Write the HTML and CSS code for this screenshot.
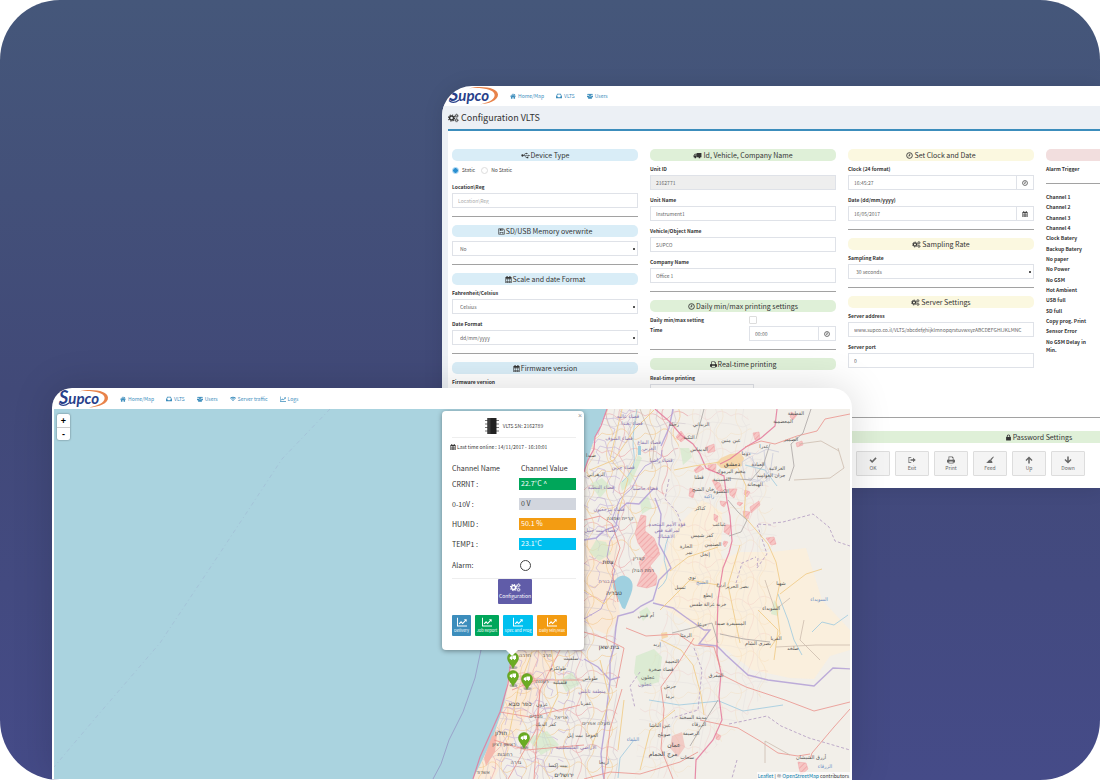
FILE: index.html
```html
<!DOCTYPE html>
<html lang="en">
<head>
<meta charset="utf-8">
<title>Supco VLTS</title>
<link rel="stylesheet" href="styles.css">
</head>
<body>
<svg class="sprite" aria-hidden="true">
  <symbol id="i-home" viewBox="0 0 16 16"><path d="M8 1.500 0 8.600l1 1.100L8 3.600l7 6.100 1-1.100-2.500-2.200V2.500h-2v2.100z"/><path d="M8 4.800 2.500 9.500V15h4v-4h3v4h4V9.500z"/></symbol>
  <symbol id="i-inbox" viewBox="0 0 16 16"><path fill-rule="evenodd" d="M3.200 2h9.600L16 9v5H0V9zM4.500 4 2.300 9H5l1 2h4l1-2h2.700L11.500 4z"/></symbol>
  <symbol id="i-users" viewBox="0 0 16 16"><circle cx="3" cy="4" r="2.200"/><circle cx="13" cy="4" r="2.200"/><circle cx="8" cy="5" r="3"/><path d="M0 7h4.500l1 2L3 11H0zM16 7h-4.500l-1 2 2.500 2h3zM3 15v-4q1-3 5-2.500 4-.5 5 2.500v4z"/></symbol>
  <symbol id="i-wifi" viewBox="0 0 16 16"><path d="M0 5.500Q8-1.500 16 5.500L14.300 7.300Q8 2 1.700 7.300zM2.800 8.300Q8 4 13.200 8.300L11.400 10.200Q8 7.600 4.600 10.200zM8 14l-2.500-2.700Q8 9.500 10.500 11.300z"/></symbol>
  <symbol id="i-chart" viewBox="0 0 16 16"><path d="M0 1h1.500v12.500H16V15H0z"/><path d="M2.800 10.300 6.500 6.500l2.500 2.500 3.700-3.800L11 3.500h4.500V8l-1.500-1.500-5 5-2.500-2.500-2.300 2.700z"/></symbol>
  <symbol id="i-cogs" viewBox="0 0 20 16"><g fill="none" stroke="currentColor"><circle cx="6.500" cy="8" r="3.600" stroke-width="2.600"/><circle cx="6.500" cy="8" r="5.600" stroke-width="2" stroke-dasharray="2.200 2.200"/><circle cx="15.500" cy="4" r="1.900" stroke-width="1.500"/><circle cx="15.500" cy="4" r="3.100" stroke-width="1.300" stroke-dasharray="1.220 1.220"/><circle cx="15.500" cy="12" r="1.900" stroke-width="1.500"/><circle cx="15.500" cy="12" r="3.100" stroke-width="1.300" stroke-dasharray="1.220 1.220"/></g></symbol>
  <symbol id="i-usb" viewBox="0 0 20 16"><circle cx="3" cy="8" r="2.600"/><path d="M3 7.300h14V5.500L20 8l-3 2.500V8.700H3z"/><path d="M6 8l3-4.500h3M8 8l3 4.500h3" fill="none" stroke="currentColor" stroke-width="1.400"/><circle cx="13" cy="3.500" r="1.700"/><path d="M13 10.800h3.400v3.400H13z"/></symbol>
  <symbol id="i-save" viewBox="0 0 16 16"><path fill-rule="evenodd" d="M1 1h11l3 3v11H1zM2.500 2.500v11H4V9h8v4.500h1.500v-9l-2-2H11V6.500H4v-4zM8 3v2.500h1.800V3zM5.500 10.500v3h5v-3z"/></symbol>
  <symbol id="i-calendar" viewBox="0 0 16 16"><path fill-rule="evenodd" d="M1 2.500h2.500V0H6v2.500h4V0h2.500v2.500H15V16H1zM2.500 6v2.300h3V6zm4 0v2.300h3V6zm4 0v2.300h3V6zm-8 3.300v2.300h3V9.300zm4 0v2.300h3V9.300zm4 0v2.300h3V9.300zm-8 3.300v2.200h3v-2.200zm4 0v2.200h3v-2.200zm4 0v2.200h3v-2.200z"/></symbol>
  <symbol id="i-truck" viewBox="0 0 18 16"><path fill-rule="evenodd" d="M7 2h11v10H7zM0 12V7.500L3 4h3.500v8zM1.500 8H5V5.500H3.500z"/><circle cx="4" cy="12.500" r="2"/><circle cx="13.500" cy="12.500" r="2"/></symbol>
  <symbol id="i-clock" viewBox="0 0 16 16"><g fill="none" stroke="currentColor" stroke-width="2"><circle cx="8" cy="8" r="6.500"/><path d="M8.500 4v4.800H5.500"/></g></symbol>
  <symbol id="i-print" viewBox="0 0 16 16"><path fill-rule="evenodd" d="M3 1h8l2 2v4h1.500L16 8.500V13h-3v2H3v-2H0V8.500L1.500 7H3zM4.500 2.500v5h7V4H10V2.500zM4.500 11v2.500h7V11z"/></symbol>
  <symbol id="i-lock" viewBox="0 0 16 16"><path fill-rule="evenodd" d="M2.500 7H4V5q0-4 4-4t4 4v2h1.500v8h-11zM6 7h4V5q0-2-2-2T6 5z"/></symbol>
  <symbol id="i-check" viewBox="0 0 16 16"><path d="M1 8.500 3.200 6.300 6.300 9.400 13 2.700l2.200 2.200-8.900 9z"/></symbol>
  <symbol id="i-exit" viewBox="0 0 16 16"><path d="M6.500 2v1.500h-4v9h4V14H1V2zM10 3.500 15.500 8 10 12.500V9.700H5V6.300h5z"/></symbol>
  <symbol id="i-feed" viewBox="0 0 16 16"><path d="M0 14q3-1 4-4l4-3 4 3 1 4zM8.500 6.500 14.500 1l1.200 1-5 6.500z"/></symbol>
  <symbol id="i-up" viewBox="0 0 16 16"><path d="M8 1 15 8.200 13.200 10 9.500 6.500V15h-3V6.500L2.800 10 1 8.200z"/></symbol>
  <symbol id="i-down" viewBox="0 0 16 16"><path d="M8 15 1 7.800 2.800 6l3.700 3.500V1h3v8.500L13.200 6 15 7.800z"/></symbol>
  <symbol id="i-pin" viewBox="0 0 24 34"><ellipse cx="13" cy="31" rx="8" ry="3" fill="#345" opacity=".35"/><path d="M12 33C9 25 1 20 1 12a11 11 0 0 1 22 0c0 8-8 13-11 21z" fill="#6aac22" stroke="#579316"/><path d="M11 7h7v7h-7zM5.500 14v-3.500L8 8.500h2.500V14z" fill="#fff"/><circle cx="9" cy="14.500" r="1.500" fill="#fff"/><circle cx="15" cy="14.500" r="1.500" fill="#fff"/></symbol>
</svg>

<main class="scene">
  <section class="window config" aria-label="Configuration">
    <header class="topbar">
      <svg class="logo" viewBox="0 0 52 20" role="img" aria-label="Supco"><path d="M22 2.300C36-.8 50.500 2 51 8.500c.4 6-9 9.500-19 10C40 16.800 48 14 47.600 8.800 47.200 3.500 36 1.200 22 2.300z" fill="#e8834a"/><path d="M2 14.500Q6 18.500 12 14" fill="none" stroke="#28408a" stroke-width="1.200"/><text x="2" y="15" class="logo-text"><tspan class="logo-cap">S</tspan>upco</text></svg>
      <nav class="nav">
        <a href="#"><svg><use href="#i-home"/></svg>Home/Map</a>
        <a href="#"><svg><use href="#i-inbox"/></svg>VLTS</a>
        <a href="#"><svg><use href="#i-users"/></svg>Users</a>
      </nav>
    </header>
    <div class="page">
      <h1 class="page-title"><svg><use href="#i-cogs"/></svg>Configuration VLTS</h1>
      <form class="panel">
        <div class="columns">
          <div class="column">
            <h2 class="pill blue"><svg class="wide"><use href="#i-usb"/></svg>Device Type</h2>
            <div class="radios">
              <label><input type="radio" name="type" checked>Static</label>
              <label><input type="radio" name="type">No Static</label>
            </div>
            <div class="field"><label for="loc">Location\Reg</label><input id="loc" type="text" placeholder="Location\Reg"></div>
            <hr>
            <h2 class="pill blue"><svg><use href="#i-save"/></svg>SD/USB Memory overwrite</h2>
            <div class="field"><select aria-label="SD/USB Memory overwrite"><option>No</option></select></div>
            <hr>
            <h2 class="pill blue"><svg><use href="#i-calendar"/></svg>Scale and date Format</h2>
            <div class="field"><label for="deg">Fahrenheit/Celsius</label><select id="deg"><option>Celsius</option></select></div>
            <div class="field"><label for="fmt">Date Format</label><select id="fmt"><option>dd/mm/yyyy</option></select></div>
            <hr>
            <h2 class="pill blue"><svg><use href="#i-calendar"/></svg>Firmware version</h2>
            <div class="field"><label for="fw">Firmware version</label><input id="fw" type="text"></div>
          </div>
          <div class="column">
            <h2 class="pill green"><svg class="wide"><use href="#i-truck"/></svg>Id, Vehicle, Company Name</h2>
            <div class="field"><label for="uid">Unit ID</label><input id="uid" type="text" value="2162771" disabled></div>
            <div class="field"><label for="uname">Unit Name</label><input id="uname" type="text" value="Instrument1"></div>
            <div class="field"><label for="vname">Vehicle/Object Name</label><input id="vname" type="text" value="SUPCO"></div>
            <div class="field"><label for="cname">Company Name</label><input id="cname" type="text" value="Office 1"></div>
            <hr>
            <h2 class="pill green"><svg><use href="#i-clock"/></svg>Daily min/max printing settings</h2>
            <div class="split"><label for="daily">Daily min/max setting</label><input id="daily" type="checkbox"></div>
            <div class="split time"><label for="time">Time</label><span class="group"><input id="time" type="text" value="00:00"><span class="addon"><svg><use href="#i-clock"/></svg></span></span></div>
            <hr>
            <h2 class="pill green"><svg><use href="#i-print"/></svg>Real-time printing</h2>
            <div class="field half"><label for="rt">Real-time printing</label><input id="rt" type="text"></div>
          </div>
          <div class="column">
            <h2 class="pill yellow"><svg><use href="#i-clock"/></svg>Set Clock and Date</h2>
            <div class="field"><label for="clock">Clock (24 format)</label><span class="group"><input id="clock" type="text" value="16:45:27"><span class="addon"><svg><use href="#i-clock"/></svg></span></span></div>
            <div class="field"><label for="date">Date (dd/mm/yyyy)</label><span class="group"><input id="date" type="text" value="16/05/2017"><span class="addon"><svg><use href="#i-calendar"/></svg></span></span></div>
            <hr>
            <h2 class="pill yellow"><svg class="wide"><use href="#i-cogs"/></svg>Sampling Rate</h2>
            <div class="field"><label for="rate">Sampling Rate</label><select id="rate"><option>30 seconds</option></select></div>
            <hr>
            <h2 class="pill yellow"><svg class="wide"><use href="#i-cogs"/></svg>Server Settings</h2>
            <div class="field"><label for="addr">Server address</label><input id="addr" type="text" value="www.supco.co.il/VLTS/abcdefghijklmnopqrstuvwxyzABCDEFGHIJKLMNC"></div>
            <div class="field"><label for="port">Server port</label><input id="port" type="text" value="0"></div>
          </div>
          <div class="column alarms">
            <h2 class="pill red"></h2>
            <h3>Alarm Trigger</h3>
            <hr>
            <ul>
              <li>Channel 1</li><li>Channel 2</li><li>Channel 3</li><li>Channel 4</li>
              <li>Clock Batery</li><li>Backup Batery</li><li>No paper</li><li>No Power</li>
              <li>No GSM</li><li>Hot Ambient</li><li>USB full</li><li>SD full</li>
              <li>Copy prog. Print</li><li>Sensor Error</li><li>No GSM Delay in Min.</li>
            </ul>
          </div>
        </div>
        <div class="password">
          <h2 class="pill green"><svg><use href="#i-lock"/></svg>Password Settings</h2>
        </div>
        <div class="keys">
          <button type="button"><svg><use href="#i-check"/></svg>OK</button>
          <button type="button"><svg><use href="#i-exit"/></svg>Exit</button>
          <button type="button"><svg><use href="#i-print"/></svg>Print</button>
          <button type="button"><svg><use href="#i-feed"/></svg>Feed</button>
          <button type="button"><svg><use href="#i-up"/></svg>Up</button>
          <button type="button"><svg><use href="#i-down"/></svg>Down</button>
        </div>
      </form>
    </div>
  </section>

  <section class="window tracker" aria-label="Map">
    <header class="topbar">
      <svg class="logo" viewBox="0 0 52 20" role="img" aria-label="Supco"><path d="M22 2.300C36-.8 50.500 2 51 8.500c.4 6-9 9.500-19 10C40 16.800 48 14 47.600 8.800 47.200 3.500 36 1.200 22 2.300z" fill="#e8834a"/><path d="M2 14.500Q6 18.500 12 14" fill="none" stroke="#28408a" stroke-width="1.200"/><text x="2" y="15" class="logo-text"><tspan class="logo-cap">S</tspan>upco</text></svg>
      <nav class="nav">
        <a href="#"><svg><use href="#i-home"/></svg>Home/Map</a>
        <a href="#"><svg><use href="#i-inbox"/></svg>VLTS</a>
        <a href="#"><svg><use href="#i-users"/></svg>Users</a>
        <a href="#"><svg><use href="#i-wifi"/></svg>Server traffic</a>
        <a href="#"><svg><use href="#i-chart"/></svg>Logs</a>
      </nav>
    </header>
    <div class="map">
      <svg class="tiles" viewBox="54 409 796 370" preserveAspectRatio="xMinYMin slice">
        <defs>
          <pattern id="streets" width="43" height="37" patternUnits="userSpaceOnUse">
            <g fill="none" stroke-width=".7">
              <path stroke="#e58f96" d="M0 9q8-5 14 1t12-2 17 1M19 0q-5 9 1 16t-1 21"/>
              <path stroke="#f0bd77" d="M0 26q9 4 15-2t12 4 16-2M33 0q5 10-2 18t2 19M6 0q-4 12 2 20t-2 17"/>
              <path stroke="#c9bfc9" d="M0 17 12 20 24 15l19 2M13 0l-2 12 5 9-3 16M27 0l4 13-5 10 1 14"/>
            </g>
          </pattern>
          <pattern id="admin" width="31" height="29" patternUnits="userSpaceOnUse">
            <path fill="none" stroke="#b9a3d4" stroke-width=".8" d="M0 5l6 3 3-4 7 2 2 7 8-1 5 3M9 29l2-7-4-5 4-6 7 2 3 8 5 2-2 6"/>
          </pattern>
          <pattern id="hatch" width="4" height="4" patternUnits="userSpaceOnUse" patternTransform="rotate(45)">
            <path fill="#f6c6c4" d="M0 0h4v4H0z"/><path fill="#f0a9aa" d="M0 0h1v4H0z"/>
          </pattern>
          <clipPath id="west"><path d="M607 409 595 437 584 472 560 560 512 650 509 690 502 712 492 740 483 760 473 779H618L616 600 662 500 690 409z"/></clipPath>
        </defs>
        <path fill="#f2efe9" d="M607 409 603 419 598 431 595 437 591 449 588 459 584 472 570 520 545 570 525 610 516 636 512 650 509 680 506 700 502 712 492 740 483 760 473 779H850V409z"/>
        <path fill="#fceedb" opacity=".85" d="M676 528 702 500 722 512 721 560 740 552 772 552 806 548 812 568 822 600 850 630V650L830 656 814 679 790 678 752 670 724 648 714 646 690 643 690 625 655 602 660 570z"/>
        <g fill="#fbe8d5" opacity=".8"><path d="M512 650h45l-8 30-20 30-15 30-20 39h-21l19-39 12-35z"/><path d="M584 540l34 0-2 45 4 30-12 20-24-10z"/></g>
        <g clip-path="url(#west)"><path fill="url(#streets)" opacity=".65" d="M450 400h260v380H450z"/><path fill="url(#admin)" opacity=".65" d="M540 409h95l-30 140-45 230-70 0z"/></g>
        <path fill="url(#streets)" opacity=".22" d="M655 409h90l20 60 12 60-10 160-30 40-60 49h-42l5-70 30-110z"/>
        <g fill="#cfe8c8" opacity=".65"><path d="M590 484l12-6 8 8-10 12zM620 483l10-9 8-19 4 3-11 25-9 8zM596 540l10 2 5 12-12 7-10-9zM636 656l18-7 8 8-3 25-17 5-8-14zM640 502l8-6 4 12-10 6zM639 612l8-5 4 6-8 8zM680 448l9 0 3 9-9 8zM774 600l5 7-1 9-7-2zM527 738l20-7 12 14-18 10zM560 680l12-8 8 12-14 8z"/></g>
        <g fill="url(#hatch)" stroke="#f0a6aa" stroke-width=".5"><path d="M641 515l5 1-1 15 9 7 5 12-5 8-7-2-9-13-3-10zM644 556l12-11 4 9-10 12 7 10-1 9-9 3-10-2 5-12-3-12z"/><path d="M676 437l5-6 5 7-5 4zM706 447l8-3 1 7-7 2zM753 433l6-1 1 7-5 1zM791 412l6 3-4 5-3-3zM796 443l6-2 1 4-6 2zM694 470l6-5 4 4-8 4zM708 465l8-1-1 8-7-2zM690 488l5 2-2 8-4-2zM712 480l8 3 3 9-6-2zM729 489l8 0-3 9-4-3zM745 490l5 2-3 5-3-3zM738 502l5 1-3 3-3-2zM750 507l9-6 1 4-9 8zM743 511l7 1-2 7-4-2zM720 501l7 1-3 5-3-2zM714 514l4 2-1 6-3-2zM725 525l6 0-2 10-5-3zM766 538l8-1 2 7-5 1zM724 541l4 1-3 5-2-3zM798 762l8 1 2 6-7 6-2-7zM716 733l5 3-2 4-3-1z"/></g>
        <path fill="#f4b8ac" d="M484 758l8-22 5-2-2 18-9 14z"/>
        <g fill="#f0a19a" opacity=".45"><path d="M672 736l10-4 3 15-7 10-8-9z"/><path d="M519 676l12-4 6 10-14 6z"/></g>
        <path fill="#f6d2a0" d="M721 458l9-4 10-1 4 5-2 8-8 3-13-1-5-5zM661 633l6-1 1 5-6 2z" opacity=".85"/>
        <path fill="#9fd0e0" d="M617 578q6-5 12 0t2 16l-6 15q-3 0-4-4l-7-15q-3-6 3-12zM638 446h3v9h-3z"/>
        <g fill="none" stroke="#9cc9df" stroke-width=".8"><path d="M637 409q-6 30-3 45t-12 28M634 740l-14 18-2 20M669 535q-8 20-3 32t-8 22M745 465l20 5 12 16M812 632l10-10 12 3 14-10M778 594l10 26 6 20 8 15M649 700l30 5 40-4 24 10 40-6"/></g>
        <g fill="none" stroke="#d0d0dc" stroke-width=".9"><path d="M742 462l8-5 7 9 8-2 4 8-12 10-12-3zM745 452l12 2 10-5 12 3M748 478l16 4 9-8 12 3M752 456l6 24M764 450l3 32M773 453l-4 28"/></g>
        <g fill="none" stroke="#a994d3" stroke-width="1.400" opacity=".75"><path d="M662 450l-1 8-16 8-6 8-7 14-12 11-8 20 7 8-9 14-3 16 8 13-6 20-8 19-5 3-14 8" stroke-width="1"/><path d="M673 409l-4 19-8 18M584 540l12-2 9-8 11-4 3-16 8-7 12 1 15-16M655 498l6 16-2 30 7 13 5 11-12 12-6 20-12 6-8 6-15 4-2 11-2 20-4 14 0 20-3 25-2 20-4 28 2 20 4 19"/><path d="M653 603l20 5 11 8 20 14 6 0-11 14 18 2 9 9 22 20 20 5 46 6 19-18 20 1"/><path d="M584 659l14 8 12 13 10-3"/></g>
        <g fill="none" stroke="#b8a3c5" stroke-width=".9" stroke-dasharray="3 2"><path d="M669 479l-4 20 12 13 6 16M773 523l10-1 30-8 16 13 6 14 15 5M758 558l-1 10 10-14-10-30 14 1M736 583l6-20 14-6M729 724l38-8 14 10 28 12 41 12M694 648l8 22-4 40-26 8M640 672l-10 14 5 22M737 760l-5 18"/></g>
        <g fill="none" stroke="#e4799b" stroke-width="1.200" opacity=".85"><path d="M607 409l-6 17-6 11-1 12-6 11-4 12M655 409l15 13 11 13 12 9 7 10 6 14 18 8 3 25 3 15 2 25-3 12-6 15-3 18-2 14-1 34 0 20 4 19-2 24 3 23-9 20-17 20-1 23-8 26-15 9M720 464l10-5 16-12 15-9 14-12 2-17M512 650l-4 34-8 28-20 45-7 22"/></g>
        <g fill="none" stroke="#ea928c" stroke-width=".9" opacity=".9"><path d="M850 414l-25 5-8 12-20 5-22 8-14-3-16 6M716 672l30 15 39 13 29 11 36-9M850 709l-16 18-22 26-2 6M700 720l38 8 22 13 18 12 20 3 12-2M626 628l20 8 32-2 16 11 20 2 6 20M584 632l20 6 20 10-8 40M673 779l-12-30 3-40-3-22 18-25 15-24M604 779l6-50 12-40M584 779l26-7 30 2 40-12 18-10M540 690l-4 40-28 49M512 690l24-10 46 0M500 712l30 5 50-12M494 740l32 10 58-5M560 650l-20 40-6 89M584 520l16-4 12 8 8 24-8 24 6 30"/></g>
        <g fill="none" stroke="#f1cd8c" stroke-width=".9"><path d="M738 468l8 18-2 30 12 14 12 14 8 18 4 20-4 20 4 32-10 14M674 470l20-4 26-4M661 640l20 10 12 15 8 30 3 20M640 770l10-40 25-20M670 571l18-14 30-10M622 409l-12 50 18 20-10 35M590 470l24-10 20-30 20-20M584 590l20 14 12-14M660 610l30-30 28 5M740 545l-12 40 12 58M758 610l20 20-4 30M780 594l26-20 16-5M532 652l-14 38-10 50M550 640l8 56-24 50M600 660l10 40-20 50M624 700l-6 50"/></g>
        <g fill="none" stroke="#aaa4a3" stroke-width=".8"><path d="M811 409l-8 24-12 11 3 22-5 15M728 500l10 12 9 8-6 12-12 4M770 444l-7 22-12 14-25-2M704 409l-8 30M718 643l-6-20-40 10M718 700l-16 26-12 20M720 634l24 5 26 3"/></g>
        <path d="M838 448l6 20-14 10-36 2M799 444l22-3 18 10M850 645l-34 0-40 2M765 580l10 30 15-12M820 660l-20-20 4-20M790 755l-25-14 0 22M640 409l14 36-2 24" fill="none" stroke="#cdbcae" stroke-width=".8"/>
        <g fill="none" stroke="#8f88bd" stroke-width=".8"><path d="M481 650l-6 28-12 34-14 28-8 24-8 15" opacity=".8"/><path d="M330 409l-48 50-62 94-60 90-62 72-44 52" stroke-dasharray="4 3 1 3" opacity=".25"/></g>
        <g class="places">
          <text x="628" y="418" class="dist">قضاء عاليه</text><text x="632" y="425" class="dist">قضاء بعبدا</text><text x="619" y="440" class="dist">قضاء الشوف</text><text x="649" y="444" class="dist">قضاء البقاع</text><text x="649" y="450" class="dist">الغربي</text><text x="661" y="462" class="dist">قضاء راشيا</text><text x="623" y="469" class="dist">قضاء جزين</text><text x="601" y="489" class="dist">قضاء النبطية</text><text x="645" y="490" class="dist">قضاء حاصبيا</text><text x="609" y="511" class="dist">قضاء مرجعيون</text><text x="600" y="532" class="dist">قضاء بنت جبيل</text><text x="667" y="526" class="dist">قوة الأمم المتحدة</text><text x="667" y="532" class="dist">لمراقبة فض</text><text x="666" y="538" class="dist">الاشتباك</text><text x="607" y="583" class="dist">ים כנרת</text>
          <text x="591" y="457">صيدا</text><text x="596" y="476">الزهراني</text><text x="674" y="426">زحلة</text><text x="701" y="426">الزبداني</text><text x="689" y="439">التكية</text><text x="699" y="451">الديماس</text><text x="731" y="442">عين منين</text><text x="746" y="455">دوما</text><text x="732" y="466" class="city">دمشق</text><text x="731" y="473">مخيم اليرموك</text><text x="758" y="466">العبادة</text><text x="777" y="470">الغزلانية</text><text x="771" y="477">حران العواميد</text><text x="755" y="486">الهيجانة</text><text x="699" y="479">قطنا</text><text x="722" y="481">الحسينية</text><text x="703" y="491">خان الشيح</text><text x="721" y="493">الكسوة</text><text x="709" y="498" class="water">زاكية</text><text x="700" y="510">كناكر</text><text x="719" y="526">غباغب</text><text x="702" y="537">كفر شمس</text><text x="713" y="546">الصنمين</text><text x="686" y="548">الحارة</text><text x="689" y="554">نمر</text><text x="705" y="556">إنخل</text><text x="692" y="579">نوى</text><text x="680" y="589">تسيل</text><text x="702" y="584" class="water">الشيخ</text><text x="721" y="586">إزرع</text><text x="737" y="588">بصر الحرير</text><text x="781" y="585">شهبا</text><text x="708" y="597">إبطع</text><text x="715" y="606">خربة غزالة</text><text x="696" y="606">طفس</text><text x="796" y="415">القطيفة</text><text x="783" y="423">المعضمية</text><text x="791" y="441">الضمير</text><text x="764" y="448">عدرا</text><text x="771" y="610">السويداء</text><text x="819" y="601" class="water">السويداء</text><text x="736" y="625">المسيفرة</text><text x="720" y="625">صيدا</text><text x="776" y="640">القريا</text><text x="758" y="645">بصرى الشام</text><text x="793" y="650">صلخد</text><text x="702" y="626">درعا</text><text x="686" y="637">الرمثا</text><text x="657" y="646">إربد</text><text x="646" y="617">أم قيس</text><text x="672" y="663">النعيمة</text><text x="661" y="671">قضاء صخرة</text><text x="648" y="679">عجلون</text><text x="645" y="686" class="dist">عجلون</text><text x="670" y="688">جرش</text><text x="670" y="698">برما</text><text x="716" y="677">المفرق</text><text x="693" y="719">مدينة السخنة</text><text x="699" y="726">الزرقاء</text><text x="691" y="735">الرصيفة</text><text x="660" y="727">عين الباشا</text><text x="664" y="736">صويلح</text><text x="633" y="741" class="water">البلقاء</text><text x="674" y="747" class="city">عمان</text><text x="663" y="756" class="city">مرج الحمام</text><text x="687" y="759">سحاب</text><text x="811" y="759">أزرق الشيشان</text><text x="825" y="768" class="water">الزرقاء</text>
          <text x="620" y="520">קריית שמונה</text><text x="608" y="564" class="city">צפת</text><text x="639" y="560">קצרין</text><text x="643" y="572">רמת הגולן</text><text x="614" y="595" class="city">טבריה</text><text x="609" y="649" class="city">בית שאן</text><text x="525" y="657">חדרה</text><text x="547" y="657">חרב</text><text x="542" y="683">רעננה</text><text x="520" y="706" class="city">כפר סבא</text><text x="560" y="684">قلقيلية</text><text x="571" y="660">سلفيت</text><text x="542" y="706">عزون</text><text x="536" y="718">מכבים</text><text x="561" y="719">אריאל</text><text x="546" y="726">كفر الديك</text><text x="501" y="735" class="city">חולון</text><text x="504" y="746">ראשון לציון</text><text x="505" y="756">רחובות</text><text x="483" y="774">אשדוד</text><text x="516" y="764">גדרה</text><text x="558" y="767">بيت إكسا</text><text x="564" y="777" class="city">ירושלים</text><text x="576" y="749" class="dist">الأراضي الفلسطينية</text><text x="590" y="680">طوباس</text><text x="592" y="693" class="dist">منطقة نابلس</text><text x="586" y="705">عقربا</text><text x="596" y="725">מעלה אפרים</text><text x="604" y="764">أريحا</text><text x="592" y="737">العوجا</text><text x="575" y="737">بيت إيل</text><text x="558" y="670">طولكرم</text>
        </g>
      </svg>
      <div class="zoom"><button type="button" aria-label="Zoom in">+</button><button type="button" aria-label="Zoom out">-</button></div>
      <svg class="pin p1"><use href="#i-pin"/></svg>
      <svg class="pin p2"><use href="#i-pin"/></svg>
      <svg class="pin p3"><use href="#i-pin"/></svg>
      <svg class="pin p4"><use href="#i-pin"/></svg>
      <article class="popup">
        <button type="button" class="close" aria-label="Close">×</button>
        <h2 class="unit"><svg viewBox="0 0 14 16"><path d="M0 2.500h14M0 6h14M0 9.500h14M0 13h14" stroke="#777" stroke-width="1.200"/><path d="M2.500 0h9v16h-9z" fill="#222"/><path d="M2.500 0h3v16h-3z" fill="#3c3c3c"/></svg>VLTS SN: 2162789</h2>
        <p class="online"><svg><use href="#i-calendar"/></svg>Last time online : 14/11/2017 - 16:10:01</p>
        <table>
          <thead><tr><th>Channel Name</th><th>Channel Value</th></tr></thead>
          <tbody>
            <tr><td>CRRNT :</td><td><span class="value ok">22.7°C ^</span></td></tr>
            <tr><td>0-10V :</td><td><span class="value idle">0 V</span></td></tr>
            <tr><td>HUMID :</td><td><span class="value warn">50.1 %</span></td></tr>
            <tr><td>TEMP1 :</td><td><span class="value cold">23.1°C</span></td></tr>
            <tr class="alarm"><td>Alarm:</td><td><span class="lamp"></span></td></tr>
          </tbody>
        </table>
        <button type="button" class="configure"><svg><use href="#i-cogs"/></svg>Configuration</button>
        <div class="reports">
          <button type="button" class="delivery"><svg><use href="#i-chart"/></svg>Delivery</button>
          <button type="button" class="job"><svg><use href="#i-chart"/></svg>Job Report</button>
          <button type="button" class="spec"><svg><use href="#i-chart"/></svg>Spec and Prog</button>
          <button type="button" class="daily"><svg><use href="#i-chart"/></svg>Daily Min/Max</button>
        </div>
      </article>
      <p class="credit"><a href="#">Leaflet</a> | © <a href="#">OpenStreetMap</a> contributors</p>
    </div>
  </section>
</main>
</body>
</html>
```

FILE: styles.css
```css
* { box-sizing: border-box; }
body { margin: 0; background: #fff; font-family: "Noto Sans CJK SC", "Noto Sans", sans-serif; font-size: 5px; line-height: 8px; color: #444; }
h1, h2, h3, p, ul { margin: 0; padding: 0; font-weight: 400; }
button, input, select { font: inherit; color: inherit; margin: 0; }
a { color: #3c8dbc; text-decoration: none; }
svg { fill: currentColor; flex: none; }
.sprite { position: absolute; width: 0; height: 0; }
.logo-text { font: italic 700 15px "Lato", sans-serif; fill: #28408a; }
.logo-cap { font-size: 18px; }

.scene { position: relative; min-height: 100vh; overflow: hidden; border-radius: 60px; background: linear-gradient(#45577a, #414978 50%, #454b88); }
.window { position: absolute; overflow: hidden; background: #fff; display: flex; flex-direction: column; }
.config { left: 442px; right: 0; top: 86px; border-top-left-radius: 30px; box-shadow: 0 0 20px rgba(0, 0, 0, .1); }
.tracker { left: 52px; right: 248px; top: 388px; bottom: 0; padding: 0 2px 1px; border-radius: 20px 20px 0 0; box-shadow: 0 0 40px rgba(0, 0, 0, .15); }

.topbar { display: flex; align-items: center; height: 21px; flex: none; gap: 11px; }
.config .topbar { height: 20px; padding-left: 5px; }
.tracker .topbar { padding-left: 3px; }
.logo { width: 52px; height: 20px; overflow: visible; }
.nav { display: flex; gap: 12px; }
.nav a { display: flex; align-items: center; gap: 2px; }
.nav svg { width: 6px; height: 6px; }

.page { background: #ecf0f5; padding-left: 6px; }
.page-title { display: flex; align-items: center; gap: 2px; height: 25px; font-size: 9px; line-height: 12px; color: #333; border-bottom: 2px solid #3c8dbc; }
.page-title svg { width: 11px; height: 10px; }
.panel { background: #fff; padding: 18px 0 12px 4px; }
.columns { display: grid; grid-template-columns: repeat(3, minmax(0, 1fr)) 54px; column-gap: 12px; height: 268px; }
.pill { display: flex; align-items: center; justify-content: center; gap: 1px; height: 12px; margin-bottom: 4px; border-radius: 5px; font-size: 7px; line-height: 12px; color: #333; }
.pill svg { width: 7px; height: 7px; }
.pill svg.wide { width: 9px; }
.blue { background: #d9edf7; }
.green { background: #dff0d8; }
.yellow { background: #fbf8e0; }
.red { background: #f2dede; border-radius: 5px 0 0 5px; }
hr { height: 1px; margin: 8px 0; border: 0; background: #a2a2a2; }
.field { display: flex; flex-direction: column; gap: 2px; margin-bottom: 6px; }
.field label, .split label, h3, .alarms li { font-weight: 700; color: #333; }
.field input, .field select, .group input { width: 100%; min-width: 0; height: 15px; padding: 0 5px; border: 1px solid #dfe2e8; border-radius: 0; background: #fff; color: #666; }
.field select { appearance: none; padding: 0 7px; background: linear-gradient(#555, #555) no-repeat right 2px center / 2px 2px, #fff; }
.field input:disabled { background: #eee; }
.field input::placeholder { color: #aaa; }
.field.half input { width: 104px; }
.radios { display: flex; gap: 6px; height: 18px; }
.radios label { display: flex; align-items: center; gap: 3px; height: 10px; }
.radios input { appearance: none; width: 7px; height: 7px; border: 1px solid #ddd; border-radius: 50%; background: #fff; }
.radios input:checked { border-color: #9fd0f0; background: radial-gradient(#2a8fd0 0 2px, #c5e4f7 3px); }
.group { display: flex; }
.addon { display: flex; align-items: center; justify-content: center; flex: none; width: 17px; height: 15px; border: 1px solid #dfe2e8; border-left: 0; }
.addon svg { width: 6px; height: 6px; }
.split { display: grid; grid-template-columns: 99px 1fr; height: 10px; }
.split input[type=checkbox] { appearance: none; width: 8px; height: 8px; border: 1px solid #ddd; border-radius: 1px; }
.split.time { height: 15px; margin-bottom: 6px; }
.alarms h3 { font-size: 5px; line-height: 8px; }
.alarms hr { margin: 10px 0 9px; }
.alarms ul { display: flex; flex-direction: column; justify-content: space-between; height: 161px; padding-right: 10px; list-style: none; }
.password { border-top: 1px solid #a2a2a2; padding-top: 13px; overflow: hidden; }
.password .pill { width: 181%; border-radius: 0; }
.keys { display: flex; justify-content: flex-end; gap: 5px; padding: 4px 15px 0 0; }
.keys button { display: flex; flex-direction: column; align-items: center; justify-content: center; width: 34px; height: 25px; padding: 0; border: 1px solid #ddd; border-radius: 1px; background: #f4f4f4; color: #666; }
.keys svg { width: 8px; height: 8px; }

.map { position: relative; flex: 1; min-height: 0; overflow: hidden; background: #aad3df; }
.tiles { display: block; width: 100%; height: 100%; }
.places text { font: 5px "DejaVu Sans", sans-serif; fill: #555; text-anchor: middle; }
.places .city { font-size: 6px; fill: #444; }
.places .dist { fill: #8673ad; }
.places .water { fill: #6f8fc4; }
.zoom { position: absolute; left: 3px; top: 5px; display: flex; flex-direction: column; width: 13px; border-radius: 2px; background: #fff; box-shadow: 0 0 2px rgba(0, 0, 0, .5); }
.zoom button { height: 13px; padding: 0; border: 0; background: none; font: 700 9px/12px "Liberation Sans", sans-serif; color: #000; }
.zoom button + button { border-top: 1px solid #ccc; }
.pin { position: absolute; width: 12px; height: 17px; }
.p1 { left: 453px; top: 243px; }
.p2 { left: 453px; top: 261px; }
.p3 { left: 467px; top: 264px; }
.p4 { left: 464px; top: 323px; }
.popup { position: absolute; left: 388px; top: 2px; width: 142px; padding: 0 8px 14px 10px; display: flex; flex-direction: column; border-radius: 4px; background: #fff; box-shadow: 0 1px 5px rgba(0, 0, 0, .4); color: #333; }
.popup::after { content: ""; position: absolute; left: 64px; top: 100%; border: 6px solid transparent; border-top-color: #fff; border-bottom: 0; }
.close { position: absolute; right: 2px; top: 1px; padding: 0; border: 0; background: none; font: 7px/8px "Liberation Sans", sans-serif; color: #999; }
.unit { display: flex; align-items: center; justify-content: center; gap: 4px; height: 27px; padding: 4px 0 0; border-bottom: 1px solid #eee; font-size: 5px; color: #444; }
.unit svg { width: 14px; height: 16px; }
.online { display: flex; align-items: center; gap: 1px; height: 17px; margin-left: -2px; }
.online svg { width: 6px; height: 6px; }
.popup table { width: 100%; border-collapse: collapse; table-layout: fixed; font-size: 7px; line-height: 11px; border-bottom: 1px solid #eee; }
.popup th, .popup td { padding: 0; text-align: left; font-weight: 400; white-space: nowrap; }
.popup th { height: 19px; vertical-align: bottom; }
.popup td { height: 20px; }
.popup .alarm td { height: 24px; }
.popup th:first-child { width: 67px; }
.popup th:last-child { padding-left: 2px; }
.value { display: block; width: 57px; height: 12px; padding-left: 2px; color: #fff; }
.ok { background: #00a65a; }
.idle { background: #d2d6de; color: #444; }
.warn { background: #f39c12; }
.cold { background: #00c0ef; }
.lamp { display: block; width: 11px; height: 11px; margin-left: 1px; border: 1px solid #444; border-radius: 50%; }
.configure, .reports button { display: flex; flex-direction: column; align-items: center; justify-content: center; padding: 0; border: 0; border-radius: 1px; color: #fff; overflow: hidden; white-space: nowrap; }
.configure { align-self: center; width: 34px; height: 25px; margin: 0 0 11px 2px; background: #605ca8; }
.configure svg { width: 11px; height: 9px; }
.reports { display: flex; gap: 4px; font-size: 4px; line-height: 7px; }
.reports button { height: 21px; }
.reports svg { width: 12px; height: 10px; }
.reports .delivery { width: 19px; background: #3c8dbc; }
.reports .job { width: 24px; background: #00a65a; }
.reports .spec { width: 30px; background: #00c0ef; }
.reports .daily { width: 30px; background: #f39c12; }
.credit { position: absolute; right: 0; bottom: 0; padding: 0 1px; background: rgba(255, 255, 255, .7); line-height: 7px; color: #333; }
.credit a { color: #0078a8; }
```
